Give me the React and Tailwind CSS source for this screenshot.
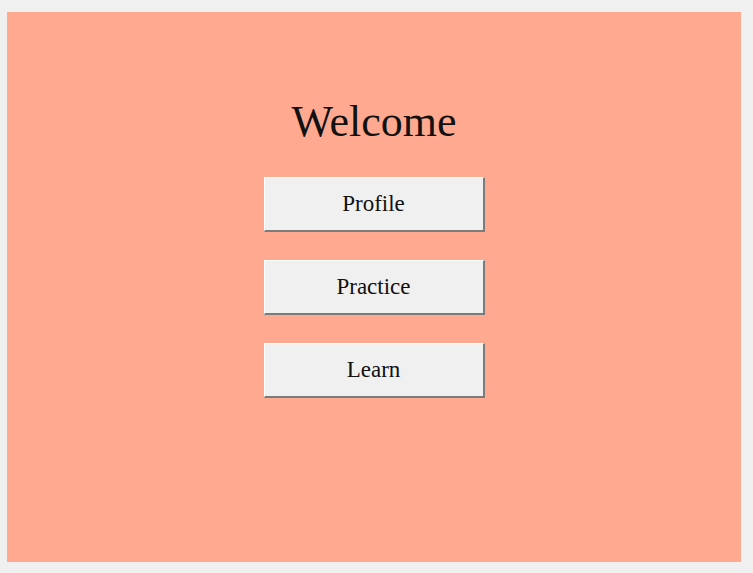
import React from 'react';

const items = ['Profile', 'Practice', 'Learn'];

const App = () => {
  return (
    <div className="h-screen w-screen bg-[#f0f0f0] pt-[12px] pl-[7px] overflow-hidden">
      <div
        className="w-[734px] h-[550px] bg-[#ffaa90] flex flex-col items-center"
        style={{ fontFamily: '"Liberation Serif", "DejaVu Serif", serif' }}
      >
        <h1 className="mt-[88px] text-[44px] leading-none text-[#111]">Welcome</h1>
        <div className="mt-[33px] flex flex-col gap-[28px]">
          {items.map((label) => (
            <button
              key={label}
              className="w-[221px] h-[55px] bg-[#f0f0f0] border-t border-l border-white border-b-2 border-r-2 border-b-[#7b7b7b] border-r-[#7b7b7b] text-[23px] text-[#111] flex items-center justify-center"
            >
              {label}
            </button>
          ))}
        </div>
      </div>
    </div>
  );
};

export default App;
